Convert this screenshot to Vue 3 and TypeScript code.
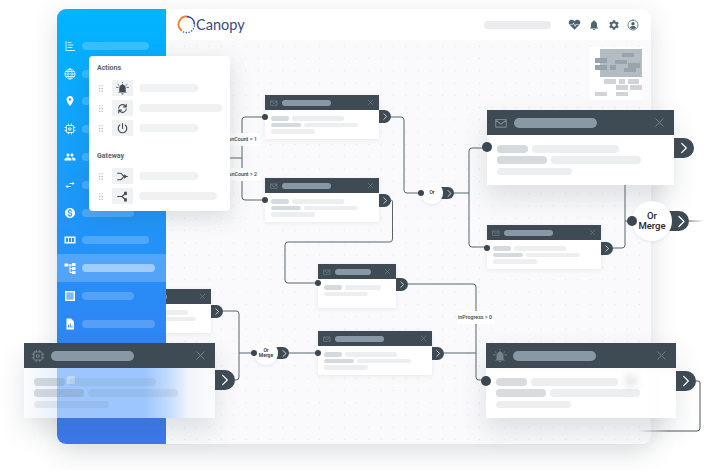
<script setup lang="ts">
import { h } from 'vue'

interface IconDef {
  fill?: string
  stroke?: string
  tint?: string
  weight?: number
}

interface FlowNode {
  id: string
  x: number
  y: number
  w: number
  size: 'sm' | 'lg'
  icon: string
  title: number
  rows: number[][]
  dot: number | null
  out: number
  glass?: boolean
  front?: boolean
  back?: boolean
}

const ICONS: Record<string, IconDef> = {
  chart: { stroke: 'M4 3v18h17M8 5h6M8 10h10M8 15h8', weight: 1.6 },
  globe: { stroke: 'M12 2a10 10 0 100 20 10 10 0 000-20zM2 12h20M3.5 7h17M3.5 17h17M12 2c-6 5-6 15 0 20M12 2c6 5 6 15 0 20', weight: 1.5 },
  pin: { fill: 'M12 2C8.13 2 5 5.13 5 9c0 5.25 7 13 7 13s7-7.75 7-13c0-3.87-3.13-7-7-7zm0 9.5a2.5 2.5 0 010-5 2.5 2.5 0 010 5z' },
  chip: { stroke: 'M6 5h12a1 1 0 011 1v12a1 1 0 01-1 1H6a1 1 0 01-1-1V6a1 1 0 011-1zM10 10h4v4h-4zM9 2v3M15 2v3M9 19v3M15 19v3M2 9h3M2 15h3M19 9h3M19 15h3', weight: 1.7 },
  people: { fill: 'M16 11c1.66 0 2.99-1.34 2.99-3S17.66 5 16 5c-1.66 0-3 1.34-3 3s1.34 3 3 3zm-8 0c1.66 0 2.99-1.34 2.99-3S9.66 5 8 5C6.34 5 5 6.34 5 8s1.34 3 3 3zm0 2c-2.33 0-7 1.17-7 3.5V19h14v-2.5c0-2.33-4.67-3.5-7-3.5zm8 0c-.29 0-.62.02-.97.05 1.16.84 1.97 1.97 1.97 3.45V19h6v-2.5c0-2.33-4.67-3.5-7-3.5z' },
  swap: { fill: 'M6.99 12L3 15l3.99 3v-2H13v-2H6.99v-2zM21 9l-3.99-3v2H11v2h6.01v2L21 9z' },
  dollar: { fill: 'M12 2C6.48 2 2 6.48 2 12s4.48 10 10 10 10-4.48 10-10S17.52 2 12 2zm1.41 16.09V20h-2.67v-1.93c-1.71-.36-3.16-1.46-3.27-3.4h1.96c.1 1.05.82 1.87 2.65 1.87 1.96 0 2.4-.98 2.4-1.59 0-.83-.44-1.61-2.67-2.14-2.48-.6-4.18-1.62-4.18-3.67 0-1.72 1.39-2.84 3.11-3.21V4h2.67v1.95c1.86.45 2.79 1.86 2.85 3.39H14.3c-.05-1.11-.64-1.87-2.22-1.87-1.5 0-2.4.68-2.4 1.64 0 .84.65 1.39 2.67 1.91s4.18 1.39 4.18 3.91c-.01 1.83-1.38 2.83-3.12 3.16z' },
  meter: { fill: 'M1 5h22v14H1zM4 8v8h4V8zM10 8v8h4V8zM16 8v8h4V8z' },
  flow: { fill: 'M1 3h7v6H1zM16 2h7v6h-7zM16 10h7v6h-7zM16 18h7v6h-7z', stroke: 'M8 6h8M12 6v15h4M12 13h4' },
  square: { fill: 'M2 2h20v20H2zM5 5v14h14V5z', tint: 'M5 5h14v14H5z' },
  report: { fill: 'M5 1h9l6 6v16H5zM8 19h2v-5H8zM11.5 19h2V11h-2zM15 19h2v-3h-2z' },
  bell: { fill: 'M12 22c1.1 0 2-.9 2-2h-4c0 1.1.9 2 2 2zm6-6v-5c0-3.07-1.63-5.64-4.5-6.32V4c0-.83-.67-1.5-1.5-1.5s-1.5.67-1.5 1.5v.68C7.64 5.36 6 7.92 6 11v5l-2 2v1h16v-1l-2-2z' },
  alarm: { fill: 'M12 23c1.1 0 2-.9 2-2h-4c0 1.1.9 2 2 2zM18 18v-6c0-3.3-2-6-4.5-6.8V5c0-.8-.7-1.5-1.5-1.5s-1.5.7-1.5 1.500v.2C8 6 6 8.700 6 12v6l-2 1v.5h16V19z', stroke: 'M1 10h3M20 10h3M3.500 4.500l2.200 2M20.500 4.500l-2.200 2M12 0v1.500', weight: 1.5 },
  gear: { fill: 'M19.14 12.94c.04-.3.06-.61.06-.94 0-.32-.02-.64-.07-.94l2.03-1.58c.18-.14.23-.41.12-.61l-1.92-3.32c-.12-.22-.37-.29-.59-.22l-2.39.96c-.5-.38-1.03-.7-1.62-.94l-.36-2.54c-.04-.24-.24-.41-.48-.41h-3.84c-.24 0-.43.17-.47.41l-.36 2.54c-.59.24-1.13.57-1.62.94l-2.39-.96c-.22-.08-.47 0-.59.22L2.74 8.87c-.12.21-.08.47.12.61l2.03 1.58c-.05.3-.09.63-.09.94s.02.64.07.94l-2.03 1.58c-.18.14-.23.41-.12.61l1.92 3.32c.12.22.37.29.59.22l2.39-.96c.5.38 1.03.7 1.62.94l.36 2.54c.05.24.24.41.48.41h3.84c.24 0 .44-.17.47-.41l.36-2.54c.59-.24 1.13-.56 1.62-.94l2.39.96c.22.08.47 0 .59-.22l1.92-3.32c.12-.22.07-.47-.12-.61l-2.01-1.58zM12 15.6c-1.98 0-3.6-1.62-3.6-3.6s1.62-3.6 3.6-3.6 3.6 1.62 3.6 3.6-1.62 3.6-3.6 3.6z' },
  user: { fill: 'M12 6a3.500 3.500 0 100 7 3.500 3.500 0 000-7zM12 14c-3 0-6 1.300-6 3v.5c1.500 1.700 3.600 2.700 6 2.700s4.500-1 6-2.700V17c0-1.700-3-3-6-3z', stroke: 'M12 2a10 10 0 100 20 10 10 0 000-20z', weight: 1.6 },
  pulse: { fill: 'M12 21.500L2.500 12C.5 9.500 1 5.500 4 3.800c2.800-1.500 6-.5 8 2 2-2.500 5.200-3.500 8-2 3 1.700 3.500 5.700 1.500 8.200z M3 11.200h5.500l1.500-3 3 5.500 1.500-2.500H21v1h-5.500l-2.500 3.800-3-5.500-1 1.700H3z' },
  sync: { stroke: 'M5 11a7 7 0 0112-4l2 2M19 13a7 7 0 01-12 4l-2-2M19 4v5h-5M5 20v-5h5' },
  power: { stroke: 'M12 3v9M7 5.500a8 8 0 1010 0' },
  merge: { stroke: 'M3 6h5c4 0 4 6 8 6M3 18h5c4 0 4-6 8-6M16 12h5', fill: 'M15 8l6 4-6 4z' },
  split: { stroke: 'M3 12h8l7-6M11 12l7 6', fill: 'M15 3h5v6h-5zM15 15h5v6h-5z' },
  mail: { stroke: 'M3 6h18v13H3zM3 7l9 7 9-7' },
  close: { stroke: 'M4 4l16 16M20 4L4 20' },
  chevron: { stroke: 'M8 4l8 8-8 8' },
}

// functional so the same svg shell can be used in the sidebar, nodes and header
const Icon = (p: { name: string }) => {
  const def = ICONS[p.name]
  const parts = []
  if (def.tint) parts.push(h('path', { d: def.tint, fill: 'currentColor', 'fill-opacity': 0.4 }))
  if (def.fill) parts.push(h('path', { d: def.fill, fill: 'currentColor', 'fill-rule': 'evenodd' }))
  if (def.stroke) {
    parts.push(h('path', {
      d: def.stroke,
      fill: 'none',
      stroke: 'currentColor',
      'stroke-width': def.weight ?? 2,
      'stroke-linecap': 'round',
      'stroke-linejoin': 'round',
    }))
  }
  return h('svg', { viewBox: '0 0 24 24' }, parts)
}

const menu = [
  { icon: 'chart', bar: 67 },
  { icon: 'globe', bar: 67 },
  { icon: 'pin', bar: 67 },
  { icon: 'chip', bar: 67 },
  { icon: 'people', bar: 67 },
  { icon: 'swap', bar: 67 },
  { icon: 'dollar', bar: 52 },
  { icon: 'meter', bar: 67 },
  { icon: 'flow', bar: 73, active: true },
  { icon: 'square', bar: 52 },
  { icon: 'report', bar: 73 },
  { icon: 'pin', bar: 67 },
]

const palette = [
  {
    title: 'Actions',
    items: [
      { icon: 'alarm', bar: 59 },
      { icon: 'sync', bar: 83 },
      { icon: 'power', bar: 59 },
    ],
  },
  {
    title: 'Gateway',
    items: [
      { icon: 'merge', bar: 59 },
      { icon: 'split', bar: 78 },
    ],
  },
]

const smRows = [[18, 52], [30, 54], [44]]
const lgRows = [[31, 87], [50, 90], [75]]

const nodes: FlowNode[] = [
  { id: 'a', x: 265, y: 95, w: 114, size: 'sm', icon: 'mail', title: 49, rows: smRows, dot: 19, out: 15 },
  { id: 'b', x: 265, y: 178, w: 114, size: 'sm', icon: 'mail', title: 49, rows: smRows, dot: 19, out: 16 },
  { id: 'c', x: 487, y: 110, w: 187, size: 'lg', icon: 'mail', title: 83, rows: lgRows, dot: 32, out: 28 },
  { id: 'd', x: 487, y: 225, w: 114, size: 'sm', icon: 'mail', title: 49, rows: smRows, dot: 20, out: 17 },
  { id: 'e', x: 318, y: 264, w: 78, size: 'sm', icon: 'mail', title: 36, rows: [[18, 36], [44]], dot: 16, out: 14 },
  { id: 'f', x: 318, y: 331, w: 114, size: 'sm', icon: 'mail', title: 49, rows: smRows, dot: 19, out: 16 },
  { id: 'g', x: 110, y: 289, w: 101, size: 'sm', icon: 'mail', title: 40, rows: [[72], [80]], dot: null, out: 16, back: true },
  { id: 'h', x: 24, y: 343, w: 191, size: 'lg', icon: 'chip', title: 83, rows: lgRows, dot: null, out: 27, glass: true, front: true },
  { id: 'i', x: 486, y: 343, w: 190, size: 'lg', icon: 'alarm', title: 83, rows: lgRows, dot: 33, out: 28, glass: true },
]

const gates = [
  { id: 'or', x: 432, y: 193, r: 11, lines: ['Or'], cls: 'tiny' },
  { id: 'merge', x: 266, y: 353, r: 12, lines: ['Or', 'Merge'], cls: 'tiny' },
  { id: 'bigmerge', x: 652, y: 221, r: 20, lines: ['Or', 'Merge'], cls: 'big' },
]

const labels = [
  { text: 'runCount = 1', x: 205, y: 133, w: 55 },
  { text: 'runCount > 2', x: 205, y: 168, w: 55 },
  { text: 'inProgress > 0', x: 457, y: 311, w: 38 },
]

const wires = [
  'M230 158H242M265 117H245Q242 117 242 120V197Q242 200 245 200H265',
  'M391 117H401Q404 117 404 120V190Q404 193 407 193H420',
  'M454 193H469M487 148H472Q469 148 469 151V244Q469 247 472 247H487',
  'M391 200Q392.5 200 392.5 202V239Q392.5 242 389.5 242H288Q285 242 285 245V280Q285 283 288 283H318',
  'M408 284H473Q476 284 476 287V377Q476 380 479 380H486M444 353H476',
  'M223 311H236Q239 311 239 314V377Q239 380 236 380H230M239 353H254M288 353H318',
  'M613 248H622Q625 248 625 245V180M625 221H632',
]

const blocks = [
  { x: 5, y: 11, w: 12, h: 5, on: true },
  { x: 32, y: 6, w: 12, h: 4, on: true },
  { x: 25, y: 13, w: 12, h: 4, on: true },
  { x: 38, y: 16, w: 12, h: 5, on: true },
  { x: 5, y: 18, w: 12, h: 5, on: true },
  { x: 20, y: 18, w: 6, h: 5, on: true },
  { x: 34, y: 21, w: 12, h: 4, on: true },
  { x: 14, y: 32, w: 12, h: 5 },
  { x: 29, y: 32, w: 6, h: 5 },
  { x: 38, y: 32, w: 11, h: 5 },
  { x: 26, y: 38, w: 12, h: 5 },
  { x: 40, y: 38, w: 12, h: 5 },
  { x: 5, y: 45, w: 12, h: 4 },
  { x: 26, y: 45, w: 12, h: 4 },
]
</script>

<template>
  <div class="stage">
    <div class="window">
      <aside class="sidebar">
        <div v-for="(item, i) in menu" :key="i" class="menu-row" :class="{ active: item.active }">
          <Icon :name="item.icon" class="menu-icon" />
          <span class="menu-bar" :style="{ width: item.bar + 'px' }"></span>
        </div>
      </aside>
      <div class="main">
        <header class="topbar">
          <svg class="logo" viewBox="0 0 36 36">
            <path d="M20 3A15 15 0 0 0 8 29" fill="none" stroke="#f0822a" stroke-width="3.6" stroke-linecap="round" />
            <path d="M20 3A15 15 0 0 1 33 17" fill="none" stroke="#2f3f86" stroke-width="3" stroke-linecap="round" />
            <path d="M33 21A15 15 0 0 1 12 32" fill="none" stroke="#3f63c4" stroke-width="3" stroke-linecap="round" stroke-dasharray="0.1 5.2" />
          </svg>
          <span class="brand">Canopy</span>
          <span class="search"></span>
          <div class="tools">
            <Icon name="pulse" class="tool wide" />
            <Icon name="bell" class="tool" />
            <Icon name="gear" class="tool" />
            <Icon name="user" class="tool" />
          </div>
        </header>
        <div class="canvas">
          <div class="minimap">
            <span class="viewport"></span>
            <span
              v-for="(b, i) in blocks"
              :key="i"
              class="mini"
              :class="{ on: b.on }"
              :style="{ left: b.x + 'px', top: b.y + 'px', width: b.w + 'px', height: b.h + 'px' }"
            ></span>
          </div>
        </div>
      </div>
    </div>

    <svg class="wires" width="720" height="470" viewBox="0 0 720 470">
      <defs>
        <linearGradient id="tail-a" gradientUnits="userSpaceOnUse" x1="689" y1="0" x2="704" y2="0">
          <stop offset="0" stop-color="#4b5760" />
          <stop offset="1" stop-color="#4b5760" stop-opacity="0" />
        </linearGradient>
        <linearGradient id="tail-b" gradientUnits="userSpaceOnUse" x1="700" y1="0" x2="638" y2="0">
          <stop offset="0.5" stop-color="#4b5760" />
          <stop offset="1" stop-color="#4b5760" stop-opacity="0" />
        </linearGradient>
      </defs>
      <path v-for="(d, i) in wires" :key="i" :d="d" class="wire" />
      <path d="M689 221H704" fill="none" stroke="url(#tail-a)" />
      <path d="M696 381H698Q700 381 700 383V428Q700 431 697 431H638" fill="none" stroke="url(#tail-b)" />
    </svg>

    <span
      v-for="l in labels"
      :key="l.text"
      class="wire-label"
      :style="{ left: l.x + 'px', top: l.y + 'px', width: l.w + 'px' }"
    >{{ l.text }}</span>

    <article
      v-for="n in nodes"
      :key="n.id"
      class="node"
      :class="[n.size, { glass: n.glass, front: n.front, back: n.back }]"
      :style="{ left: n.x + 'px', top: n.y + 'px', width: n.w + 'px' }"
    >
      <span class="outlet" :style="{ top: n.out + 'px' }"><Icon name="chevron" class="chev" /></span>
      <span v-if="n.id === 'i'" class="ghost"><Icon name="chevron" class="chev" /></span>
      <div class="node-head">
        <Icon :name="n.icon" class="node-icon" />
        <span class="node-title" :style="{ width: n.title + 'px' }"></span>
        <Icon name="close" class="node-close" />
      </div>
      <div class="node-body">
        <span v-if="n.front" class="under-glass"></span>
        <div v-for="(row, r) in n.rows" :key="r" class="node-line">
          <span
            v-for="(w, c) in row"
            :key="c"
            class="pill"
            :class="{ strong: c === 0 && row.length > 1 }"
            :style="{ width: w + 'px' }"
          ></span>
        </div>
      </div>
      <span v-if="n.dot !== null" class="inlet" :style="{ top: n.dot + 'px' }"></span>
    </article>

    <div
      v-for="g in gates"
      :key="g.id"
      class="gate"
      :class="g.cls"
      :style="{ left: g.x - g.r + 'px', top: g.y - g.r + 'px', width: g.r * 2 + 'px', height: g.r * 2 + 'px' }"
    >
      <span class="gate-out"><Icon name="chevron" class="chev" /></span>
      <div class="gate-disc">
        <span v-for="t in g.lines" :key="t">{{ t }}</span>
      </div>
      <span class="gate-in"></span>
    </div>

    <section class="palette">
      <div v-for="group in palette" :key="group.title" class="group">
        <h4 class="group-title">{{ group.title }}</h4>
        <div v-for="item in group.items" :key="item.icon" class="palette-row">
          <svg class="grip" viewBox="0 0 4 7">
            <circle v-for="c in 6" :key="c" :cx="c % 2 ? 0.8 : 3.2" :cy="0.8 + Math.floor((c - 1) / 2) * 2.7" r="0.65" />
          </svg>
          <span class="palette-icon"><Icon :name="item.icon" /></span>
          <span class="palette-bar" :style="{ width: item.bar + 'px' }"></span>
        </div>
      </div>
    </section>
  </div>
</template>

<style scoped>
.stage {
  position: relative;
  width: 720px;
  height: 470px;
  padding: 9px 69px 26px 57px;
  box-sizing: border-box;
  overflow: hidden;
  background: #fff;
  font-family: Roboto, "Liberation Sans", sans-serif;
}

.window {
  display: flex;
  height: 100%;
  border-radius: 9px;
  overflow: hidden;
  box-shadow: 0 8px 26px rgba(55, 65, 85, 0.18);
}

.sidebar {
  position: relative;
  z-index: 3;
  width: 109px;
  flex-shrink: 0;
  padding-top: 23px;
  box-sizing: border-box;
  color: #fff;
  background: linear-gradient(180deg, #00b5ff 0%, #2491f8 55%, #3d78ee 100%);
}

.menu-row {
  display: flex;
  align-items: center;
  gap: 6px;
  height: 27.8px;
  padding-left: 7px;
}

.menu-row.active {
  background: rgba(255, 255, 255, 0.2);
}

.menu-icon {
  width: 12px;
  height: 12px;
  flex-shrink: 0;
}

.menu-bar {
  height: 8px;
  border-radius: 4px;
  background: rgba(255, 255, 255, 0.2);
}

.active .menu-bar {
  background: rgba(255, 255, 255, 0.45);
}

.main {
  flex: 1;
  display: flex;
  flex-direction: column;
  min-width: 0;
}

.topbar {
  display: flex;
  align-items: center;
  height: 31px;
  padding: 0 12px 0 11px;
  flex-shrink: 0;
  background: #fff;
}

.logo {
  width: 19px;
  height: 19px;
  flex-shrink: 0;
}

.brand {
  margin-left: 0;
  font-family: Lato, "Open Sans", sans-serif;
  font-size: 14.5px;
  color: #3c4a78;
}

.search {
  width: 67px;
  height: 8px;
  margin-left: auto;
  border-radius: 4px;
  background: #ececee;
}

.tools {
  display: flex;
  align-items: center;
  gap: 7.5px;
  margin-left: 17px;
  color: #4f626f;
}

.tool {
  width: 12px;
  height: 12px;
}

.tool.wide {
  width: 13px;
  height: 13px;
}

.canvas {
  position: relative;
  flex: 1;
  background-color: #fafafc;
  background-image: radial-gradient(circle, #dfe2e6 0.6px, transparent 0.9px);
  background-size: 12.3px 12.3px;
}

.minimap {
  position: absolute;
  top: 7px;
  right: 8px;
  width: 53px;
  height: 53px;
  background: #fff;
}

.viewport {
  position: absolute;
  left: 10px;
  top: 2px;
  width: 42px;
  height: 28px;
  background: #b4bcc3;
}

.mini {
  position: absolute;
  background: #d0d4d8;
}

.mini.on {
  background: #98a3ac;
}

.wires {
  position: absolute;
  left: 0;
  top: 0;
  z-index: 1;
  pointer-events: none;
}

.wire {
  fill: none;
  stroke: #59666f;
  stroke-width: 1;
}

.wire-label {
  position: absolute;
  z-index: 1;
  height: 13px;
  padding-right: 3px;
  box-sizing: border-box;
  border-radius: 2px;
  background: #fff;
  font-size: 5.3px;
  line-height: 13px;
  font-weight: 500;
  text-align: right;
  white-space: nowrap;
  color: #39434b;
}

.node {
  position: absolute;
  z-index: 2;
  box-shadow: 0 1px 4px rgba(70, 80, 95, 0.1);
}

.node.lg {
  box-shadow: 0 12px 26px rgba(70, 80, 95, 0.16);
}

.node.back {
  z-index: 1;
}

.node.front {
  z-index: 5;
}

.node-head {
  position: relative;
  display: flex;
  align-items: center;
  background: #3f4b54;
  color: #76868f;
}

.sm .node-head {
  height: 15px;
  padding: 0 5px;
  gap: 3.5px;
}

.lg .node-head {
  height: 25px;
  padding: 0 9px 0 7px;
  gap: 6px;
}

.node-icon {
  flex-shrink: 0;
}

.sm .node-icon {
  width: 8px;
  height: 8px;
}

.lg .node-icon {
  width: 14px;
  height: 14px;
}

.node-title {
  background: #8899a5;
}

.sm .node-title {
  height: 6px;
  border-radius: 3px;
}

.lg .node-title {
  height: 10px;
  border-radius: 5px;
}

.node-close {
  margin-left: auto;
  flex-shrink: 0;
}

.sm .node-close {
  width: 7px;
  height: 7px;
}

.lg .node-close {
  width: 11px;
  height: 11px;
}

.node-body {
  position: relative;
  display: flex;
  flex-direction: column;
  background: #fff;
}

.sm .node-body {
  height: 29px;
  box-sizing: border-box;
  padding: 6px 6px 0;
  gap: 2.2px;
}

.lg .node-body {
  height: 50px;
  box-sizing: border-box;
  padding: 10px 10px 0;
  gap: 3.8px;
}

.glass .node-body {
  background: rgba(255, 255, 255, 0.88);
  backdrop-filter: blur(3px);
}

/* sharp edge on the sidebar side, soft fade towards the canvas */
.front .node-body {
  background: linear-gradient(90deg, #fbfcfe 0, #e9f0fb 33px, #9cc6fd 33px, #9cc6fd 120px, #c3dcfd 145px, #f1f5fb 165px, #fbfbfc 100%);
  backdrop-filter: none;
}

.under-glass {
  position: absolute;
  left: 43px;
  top: 8px;
  width: 8px;
  height: 8px;
  border-radius: 1px;
  background: rgba(255, 255, 255, 0.35);
}

.node-line {
  display: flex;
  position: relative;
}

.sm .node-line {
  gap: 3px;
}

.lg .node-line {
  gap: 4px;
}

.pill {
  background: #eceef0;
}

.pill.strong {
  background: #d5dade;
}

.sm .pill {
  height: 4.5px;
  border-radius: 2.25px;
}

.lg .pill {
  height: 7.5px;
  border-radius: 3.75px;
}

.glass .pill {
  background: rgba(130, 140, 150, 0.15);
}

.glass .pill.strong {
  background: rgba(130, 140, 150, 0.3);
}

.outlet {
  position: absolute;
  left: 100%;
  display: flex;
  align-items: center;
  justify-content: center;
  background: #3f4b54;
  color: #fff;
}

.sm .outlet {
  width: 12px;
  height: 13px;
  border-radius: 0 7px 7px 0;
}

.lg .outlet {
  width: 20px;
  height: 20px;
  border-radius: 0 10px 10px 0;
}

.chev {
  width: 70%;
  height: 70%;
}

.ghost {
  position: absolute;
  left: 139px;
  top: 32px;
  display: flex;
  align-items: center;
  justify-content: center;
  width: 13px;
  height: 12px;
  border-radius: 0 6px 6px 0;
  background: #3f4b54;
  color: #fff;
}

.inlet {
  position: absolute;
  background: #3a4650;
  border-radius: 50%;
}

.sm .inlet {
  left: -3px;
  width: 6px;
  height: 6px;
}

.lg .inlet {
  left: -5px;
  width: 10px;
  height: 10px;
}

.gate {
  position: absolute;
  z-index: 2;
  color: #1e2529;
}

.gate-disc {
  position: relative;
  display: flex;
  flex-direction: column;
  align-items: center;
  justify-content: center;
  width: 100%;
  height: 100%;
  border-radius: 50%;
  background: #fff;
  box-shadow: 0 1px 3px rgba(70, 80, 95, 0.12);
}

.tiny .gate-disc {
  font-size: 5px;
  line-height: 5.5px;
  font-weight: 500;
}

.big .gate-disc {
  font-size: 9.5px;
  line-height: 10px;
  font-weight: 500;
}

.gate-out {
  position: absolute;
  top: 50%;
  display: flex;
  align-items: center;
  justify-content: flex-end;
  background: #3f4b54;
  color: #fff;
}

.tiny .gate-out {
  left: calc(100% - 4px);
  width: 15px;
  height: 12px;
  margin-top: -6px;
  border-radius: 0 6px 6px 0;
}

.tiny .chev {
  width: 9px;
  height: 9px;
}

.big .gate-out {
  left: calc(100% - 6px);
  width: 23px;
  height: 20px;
  margin-top: -10px;
  border-radius: 0 10px 10px 0;
}

.big .chev {
  width: 15px;
  height: 15px;
}

.gate-in {
  position: absolute;
  top: 50%;
  border-radius: 50%;
  background: #3a4650;
}

.tiny .gate-in {
  left: -3px;
  width: 6px;
  height: 6px;
  margin-top: -3px;
}

.big .gate-in {
  left: -5px;
  width: 10px;
  height: 10px;
  margin-top: -5px;
}

.palette {
  position: absolute;
  left: 89px;
  top: 56px;
  z-index: 4;
  display: flex;
  flex-direction: column;
  gap: 16px;
  width: 141px;
  height: 155px;
  padding: 8px 8px 0;
  box-sizing: border-box;
  border-radius: 4px;
  background: #fff;
  box-shadow: 0 6px 22px rgba(60, 70, 85, 0.18);
}

.group {
  display: flex;
  flex-direction: column;
  gap: 4px;
}

.group-title {
  margin: 0 0 4px;
  font-size: 7px;
  line-height: 8px;
  font-weight: 700;
  color: #5b636b;
}

.palette-row {
  display: flex;
  align-items: center;
  height: 16px;
  padding-left: 2px;
}

.grip {
  width: 4px;
  height: 7px;
  margin-right: 9px;
  fill: #a3aab0;
}

.palette-icon {
  display: flex;
  align-items: center;
  justify-content: center;
  width: 21px;
  height: 16px;
  margin-right: 6px;
  background: #f0f1f3;
  color: #3f4b54;
}

.palette-icon svg {
  width: 13px;
  height: 13px;
}

.palette-bar {
  height: 8px;
  border-radius: 4px;
  background: #f0f1f3;
}
</style>

<style>
html,
body {
  margin: 0;
  background: #fff;
}
</style>
